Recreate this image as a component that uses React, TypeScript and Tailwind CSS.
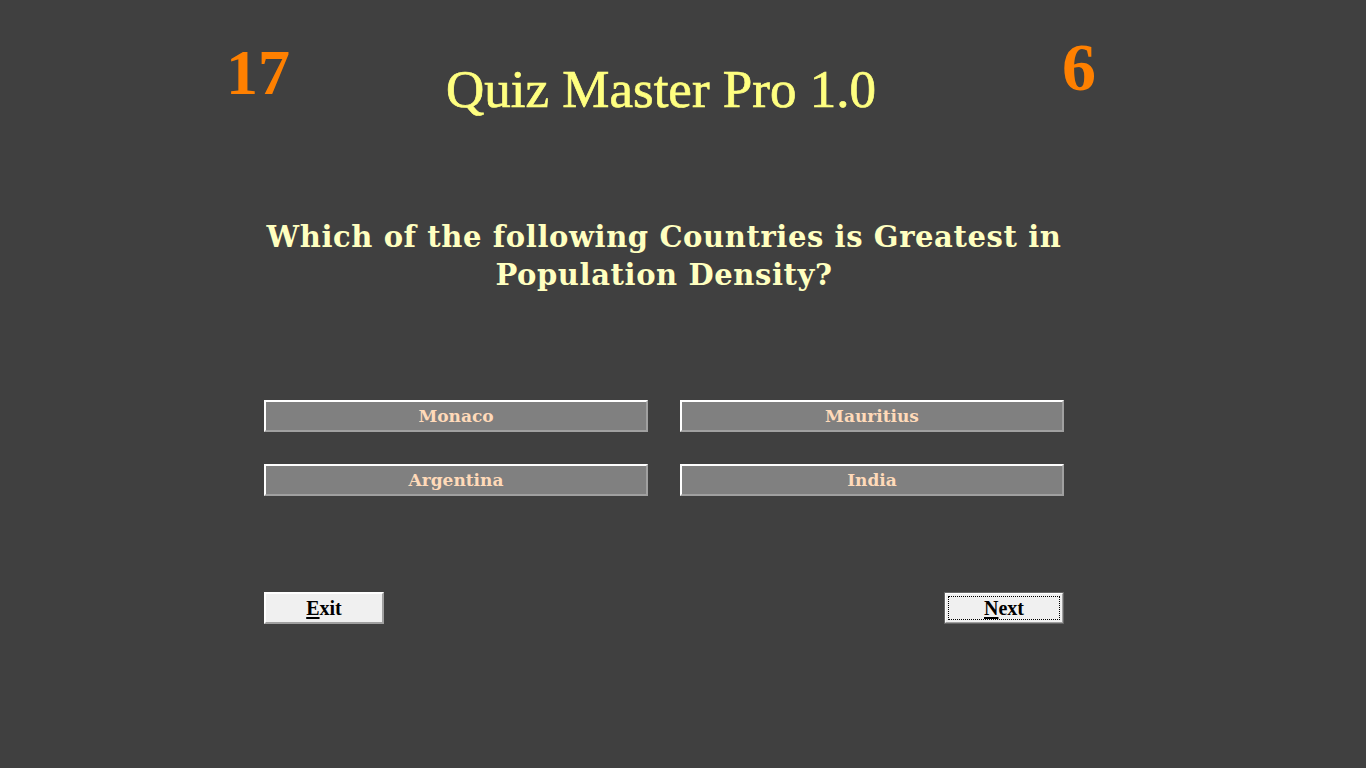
import React from "react";

const answers = ["Monaco", "Mauritius", "Argentina", "India"];

const serif = "font-['Liberation_Serif','Times_New_Roman',serif]";
const dejavu = "font-['DejaVu_Serif','Liberation_Serif',serif]";

const AnswerButton = ({ label }: { label: string }) => {
  return (
    <button
      className={`h-[32px] w-full bg-[#808080] border-2 border-t-white border-l-white border-b-[#a0a0a0] border-r-[#a0a0a0] flex items-center justify-center ${dejavu} font-bold text-[17px] leading-[21px] text-[#ffdab9]`}
    >
      {label}
    </button>
  );
};

export default function App() {
  return (
    <div className="min-h-screen w-full bg-[#404040] overflow-hidden">
      {/* header: score, title, question number */}
      <div className="ml-[226px] w-[870px] grid grid-cols-[1fr_auto_1fr] items-start">
        <div className={`mt-[41px] ${serif} font-bold text-[64px] leading-[64px] text-[#ff8000]`}>17</div>
        <div
          className={`mt-[59px] ${serif} text-[53px] leading-[60px] text-[#ffff80] [-webkit-text-stroke:0.7px_#ffff80]`}
        >
          Quiz Master Pro 1.0
        </div>
        <div className={`mt-[35px] justify-self-end ${serif} font-bold text-[68px] leading-[64px] text-[#ff8000]`}>
          6
        </div>
      </div>

      <div className="ml-[264px] w-[800px]">
        <div
          className={`mt-[99px] text-center ${dejavu} font-bold text-[29px] leading-[38px] tracking-[0.6px] text-[#ffffc0]`}
        >
          Which of the following Countries is Greatest in Population Density?
        </div>

        <div className="mt-[106px] grid grid-cols-2 gap-x-8 gap-y-8">
          {answers.map((a) => (
            <AnswerButton key={a} label={a} />
          ))}
        </div>

        <div className="mt-[96px] flex justify-between">
          <button
            className={`h-[32px] w-[120px] bg-[#f0f0f0] border-2 border-t-white border-l-white border-b-[#a0a0a0] border-r-[#a0a0a0] flex items-center justify-center ${serif} font-bold text-[20px] leading-[22px] text-black`}
          >
            <span>
              <span className="underline underline-offset-2">E</span>xit
            </span>
          </button>
          <button className="h-[32px] w-[120px] border border-[#666666] bg-[#f0f0f0]">
            <div className="h-full w-full border border-t-white border-l-white border-b-[#a0a0a0] border-r-[#a0a0a0] p-[2px]">
              <div
                className={`h-full w-full border border-dotted border-black flex items-center justify-center ${serif} font-bold text-[20px] leading-[22px] text-black`}
              >
                <span>
                  <span className="underline underline-offset-2">N</span>ext
                </span>
              </div>
            </div>
          </button>
        </div>
      </div>
    </div>
  );
}
